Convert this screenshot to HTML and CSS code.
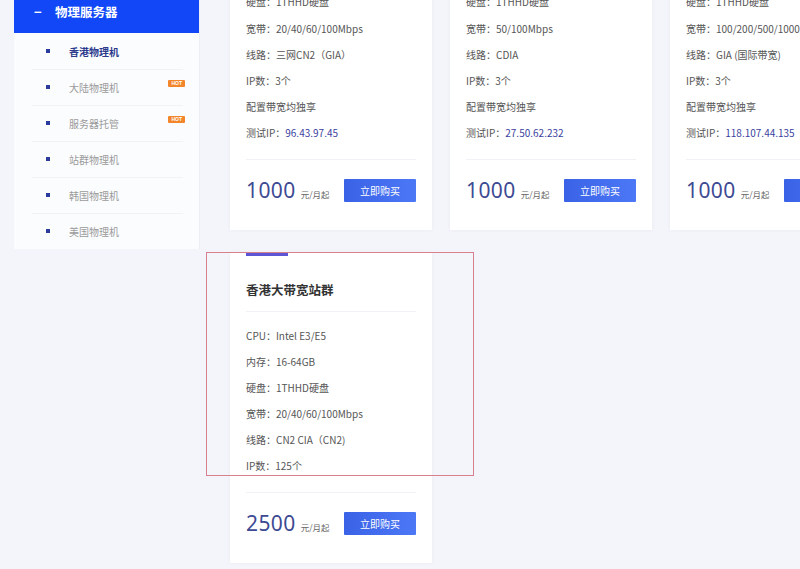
FILE: index.html
```html
<!DOCTYPE html>
<html lang="zh-CN">
<head>
<meta charset="utf-8">
<title>物理服务器</title>
<link rel="stylesheet" href="styles.css">
</head>
<body>
<div class="page">
  <aside class="sidebar">
    <div class="side-head"><span class="minus">−</span><span>物理服务器</span></div>
    <ul class="side-list">
      <li class="side-item active"><i class="dot"></i><span>香港物理机</span></li>
      <li class="side-item"><i class="dot"></i><span>大陆物理机</span><em class="hot">HOT</em></li>
      <li class="side-item"><i class="dot"></i><span>服务器托管</span><em class="hot">HOT</em></li>
      <li class="side-item"><i class="dot"></i><span>站群物理机</span></li>
      <li class="side-item"><i class="dot"></i><span>韩国物理机</span></li>
      <li class="side-item"><i class="dot"></i><span>美国物理机</span></li>
    </ul>
  </aside>
  <main class="main">
    <div class="grid">
      <div class="card">
        <i class="accent"></i>
        <h3 class="title">香港CN2物理机</h3>
        <ul class="specs">
          <li>CPU：Intel E3/E5</li>
          <li>内存：16-64GB</li>
          <li>硬盘：1THHD硬盘</li>
          <li>宽带：20/40/60/100Mbps</li>
          <li>线路：三网CN2（GIA）</li>
          <li>IP数：3个</li>
          <li>配置带宽均独享</li>
          <li>测试IP：<span class="ip">96.43.97.45</span></li>
        </ul>
        <div class="foot"><div class="price"><b>1000</b><small>元/月起</small></div><a class="buy">立即购买</a></div>
      </div>
      <div class="card">
        <i class="accent"></i>
        <h3 class="title">大陆BGP物理机</h3>
        <ul class="specs">
          <li>CPU：Intel E3/E5</li>
          <li>内存：16-64GB</li>
          <li>硬盘：1THHD硬盘</li>
          <li>宽带：50/100Mbps</li>
          <li>线路：CDIA</li>
          <li>IP数：3个</li>
          <li>配置带宽均独享</li>
          <li>测试IP：<span class="ip">27.50.62.232</span></li>
        </ul>
        <div class="foot"><div class="price"><b>1000</b><small>元/月起</small></div><a class="buy">立即购买</a></div>
      </div>
      <div class="card">
        <i class="accent"></i>
        <h3 class="title">香港国际带宽物理机</h3>
        <ul class="specs">
          <li>CPU：Intel E3/E5</li>
          <li>内存：16-64GB</li>
          <li>硬盘：1THHD硬盘</li>
          <li>宽带：100/200/500/1000Mbps</li>
          <li>线路：GIA (国际带宽)</li>
          <li>IP数：3个</li>
          <li>配置带宽均独享</li>
          <li>测试IP：<span class="ip">118.107.44.135</span></li>
        </ul>
        <div class="foot"><div class="price"><b>1000</b><small>元/月起</small></div><a class="buy">立即购买</a></div>
      </div>
      <div class="card">
        <i class="accent"></i>
        <h3 class="title">香港大带宽站群</h3>
        <ul class="specs">
          <li>CPU：Intel E3/E5</li>
          <li>内存：16-64GB</li>
          <li>硬盘：1THHD硬盘</li>
          <li>宽带：20/40/60/100Mbps</li>
          <li>线路：CN2 CIA（CN2)</li>
          <li>IP数：125个</li>
        </ul>
        <div class="foot"><div class="price"><b>2500</b><small>元/月起</small></div><a class="buy">立即购买</a></div>
      </div>
    </div>
  </main>
  <div class="highlight"></div>
</div>
</body>
</html>
```
FILE: styles.css
```css
* { box-sizing: border-box; margin: 0; padding: 0; }
html, body { width: 800px; height: 569px; overflow: hidden; }
body {
  background: #f4f5fa;
  font-family: "Noto Sans CJK SC", "Noto Sans", sans-serif;
  color: #555;
}
.page {
  position: relative;
  display: flex;
  align-items: flex-start;
  padding-left: 14px;
  gap: 30px;
}
.sidebar {
  flex: 0 0 186px;
  background: #fbfcfe;
  border-right: 1px solid #eceef4;
  margin-top: -11px;
}
.side-head {
  height: 44px;
  background: #1147f6;
  color: #fff;
  font-size: 12.5px;
  font-weight: 700;
  display: flex;
  align-items: center;
  padding-left: 20px;
  gap: 12px;
}
.minus { font-size: 13px; font-weight: 700; width: 9px; }
.side-list { list-style: none; }
.side-item {
  height: 36px;
  display: flex;
  align-items: center;
  padding-left: 32px;
  padding-right: 14px;
  font-size: 10px;
  color: #9a9a9a;
  position: relative;
}
.side-item + .side-item::before {
  content: "";
  position: absolute;
  left: 18px;
  right: 16px;
  top: 0;
  border-top: 1px solid #f1f2f6;
}
.side-item.active { color: #2c3a8c; font-weight: 700; }
.dot {
  width: 4px;
  height: 4px;
  background: #2b3d9c;
  margin-right: 19px;
}
.hot {
  margin-left: auto;
  margin-top: -8px;
  background: #f3852a;
  color: #fff;
  font-style: normal;
  font-size: 5px;
  line-height: 7px;
  padding: 0 3px;
  border-radius: 1px;
  font-family: "Liberation Sans", sans-serif;
  font-weight: 700;
}
.main { flex: 1; margin-top: -133px; }
.grid {
  display: grid;
  grid-template-columns: repeat(3, 202px);
  column-gap: 18px;
  row-gap: 23px;
  align-items: start;
}
.card {
  position: relative;
  background: #fff;
  box-shadow: 0 0 4px rgba(40, 60, 140, 0.05);
  padding: 27px 16px 28px;
}
.accent {
  position: absolute;
  left: 16px;
  top: 0;
  width: 42px;
  height: 3px;
  background: #5b55d6;
}
.title {
  font-size: 12.5px;
  font-weight: 700;
  color: #333;
  line-height: 20px;
  padding-bottom: 11px;
  border-bottom: 1px solid #f1f2f5;
}
.specs {
  list-style: none;
  margin-top: 11px;
  padding-bottom: 12px;
  border-bottom: 1px solid #f1f2f5;
}
.specs li {
  font-size: 10px;
  line-height: 26.2px;
  height: 26.2px;
  color: #555;
  white-space: nowrap;
}
.ip { color: #3b3fa0; }
.foot {
  margin-top: 19px;
  display: flex;
  align-items: center;
  justify-content: space-between;
}
.price { display: flex; align-items: baseline; }
.price b {
  font-family: "Noto Sans", sans-serif;
  font-weight: 400;
  font-size: 21px;
  letter-spacing: 0.4px;
  color: #3d4a93;
  line-height: 23px;
}
.price small {
  font-size: 8.5px;
  color: #666;
  margin-left: 5px;
}
.buy {
  width: 72px;
  height: 23px;
  display: flex;
  align-items: center;
  justify-content: center;
  background: linear-gradient(90deg, #3a62e6, #4c78f6);
  color: #fff;
  font-size: 10px;
  border-radius: 1px;
}
.highlight {
  position: absolute;
  left: 206px;
  top: 252px;
  width: 268px;
  height: 224px;
  border: 1px solid #d8808b;
  pointer-events: none;
}
```
